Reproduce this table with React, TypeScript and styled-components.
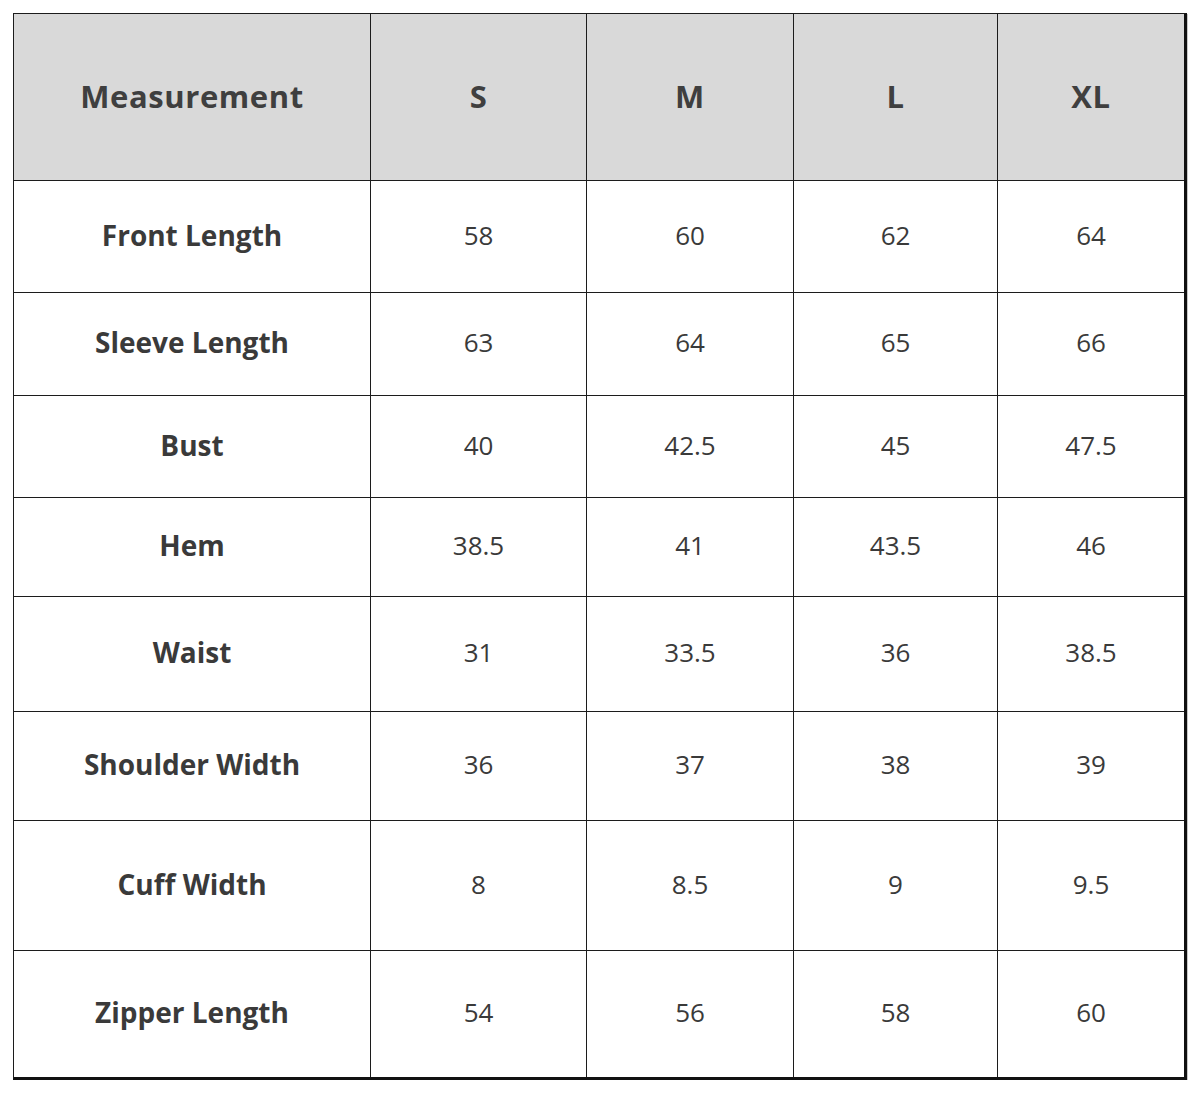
import React from 'react';
import styled, { createGlobalStyle } from 'styled-components';

const GlobalStyle = createGlobalStyle`
  html, body {
    margin: 0;
    background: #ffffff;
  }
  body {
    font-family: 'Open Sans', 'Noto Sans', sans-serif;
  }
`;

const sizes = ['S', 'M', 'L', 'XL'];

const rows: { label: string; values: string[]; height: number }[] = [
  { label: 'Front Length', values: ['58', '60', '62', '64'], height: 111 },
  { label: 'Sleeve Length', values: ['63', '64', '65', '66'], height: 102 },
  { label: 'Bust', values: ['40', '42.5', '45', '47.5'], height: 101 },
  { label: 'Hem', values: ['38.5', '41', '43.5', '46'], height: 98 },
  { label: 'Waist', values: ['31', '33.5', '36', '38.5'], height: 114 },
  { label: 'Shoulder Width', values: ['36', '37', '38', '39'], height: 108 },
  { label: 'Cuff Width', values: ['8', '8.5', '9', '9.5'], height: 129 },
  { label: 'Zipper Length', values: ['54', '56', '58', '60'], height: 126 },
];

const HEADER_HEIGHT = 166;

const Page = styled.div`
  padding: 13px 0 0 13px;
`;

const Grid = styled.div<{ $rows: string }>`
  display: grid;
  width: fit-content;
  grid-template-columns: 356px 215px 206px 203px 186px;
  grid-template-rows: ${p => p.$rows};
  gap: 1px;
  background: #1c1c1c;
  border-top: 1px solid #1c1c1c;
  border-left: 1px solid #1c1c1c;
  border-right: 3px solid #111111;
  border-bottom: 3px solid #111111;
  box-shadow: 1px 1px 0 #c8c8c8;
`;

const Cell = styled.div<{ $head?: boolean; $label?: boolean }>`
  display: flex;
  align-items: center;
  justify-content: center;
  padding-bottom: ${p => (p.$head ? '2px' : '4px')};
  background: ${p => (p.$head ? '#d9d9d9' : '#ffffff')};
  color: ${p => (p.$head ? '#3f3f3f' : '#3a3a3a')};
  font-size: ${p => (p.$head ? '31px' : p.$label ? '28px' : '26px')};
  font-weight: ${p => (p.$head || p.$label ? 700 : 400)};
  letter-spacing: ${p => (p.$head ? '0.6px' : '0')};
`;

const App: React.FC = () => {
  const template = [HEADER_HEIGHT, ...rows.map(r => r.height)]
    .map(h => `${h}px`)
    .join(' ');

  return (
    <Page>
      <GlobalStyle />
      <Grid $rows={template}>
        <Cell $head>Measurement</Cell>
        {sizes.map(s => (
          <Cell key={s} $head>
            {s}
          </Cell>
        ))}
        {rows.map(row => (
          <React.Fragment key={row.label}>
            <Cell $label>{row.label}</Cell>
            {row.values.map((v, i) => (
              <Cell key={i}>{v}</Cell>
            ))}
          </React.Fragment>
        ))}
      </Grid>
    </Page>
  );
};

export default App;
